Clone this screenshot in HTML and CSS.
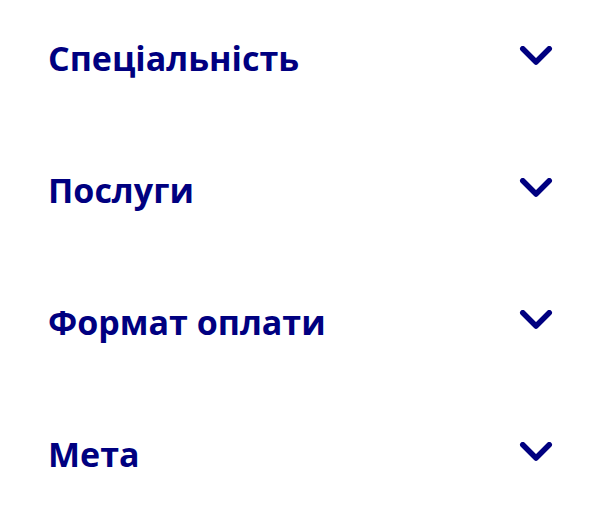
FILE: index.html
```html
<!DOCTYPE html>
<html lang="uk">
<head>
<meta charset="utf-8">
<link rel="stylesheet" href="styles.css">
</head>
<body>
<div class="filters">
  <div class="row"><span class="title">Спеціальність</span><svg class="chev" viewBox="0 0 34 20"><path d="M3.75 2.75 L17 16 L30.25 2.75"/></svg></div>
  <div class="row"><span class="title">Послуги</span><svg class="chev" viewBox="0 0 34 20"><path d="M3.75 2.75 L17 16 L30.25 2.75"/></svg></div>
  <div class="row"><span class="title">Формат оплати</span><svg class="chev" viewBox="0 0 34 20"><path d="M3.75 2.75 L17 16 L30.25 2.75"/></svg></div>
  <div class="row"><span class="title">Мета</span><svg class="chev" viewBox="0 0 34 20"><path d="M3.75 2.75 L17 16 L30.25 2.75"/></svg></div>
</div>
</body>
</html>
```
FILE: styles.css
```css
html, body { margin: 0; padding: 0; background: #fff; }
.filters {
  padding: 24px 48px 0 48px;
  display: flex;
  flex-direction: column;
  gap: 64px;
}
.row {
  height: 68px;
  display: flex;
  justify-content: space-between;
  align-items: flex-start;
}
.title {
  font-family: "Open Sans", sans-serif;
  font-weight: 700;
  font-size: 34px;
  line-height: 68px;
  color: #000080;
}
.chev {
  width: 34px;
  height: 20px;
  margin-top: 22px;
  margin-right: -1px;
  fill: none;
  stroke: #000080;
  stroke-width: 5.5;
  stroke-linecap: round;
  stroke-linejoin: round;
}
```
